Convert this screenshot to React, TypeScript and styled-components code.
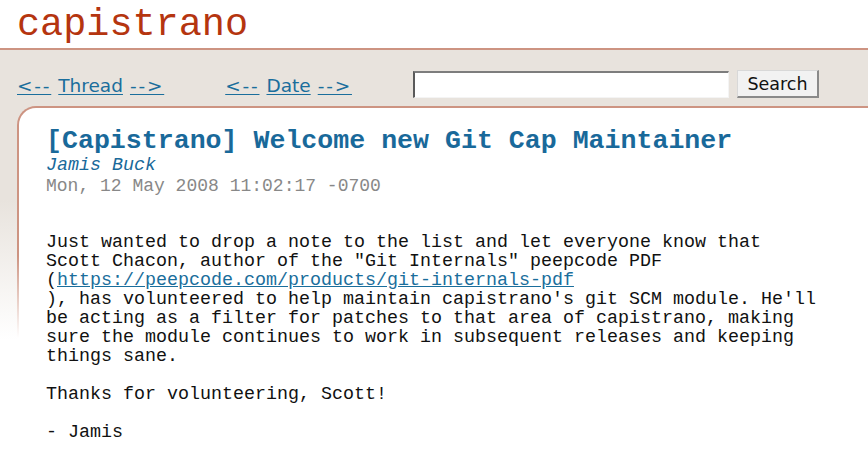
import React from "react";
import styled, { createGlobalStyle } from "styled-components";

const Global = createGlobalStyle`
  html, body { margin: 0; padding: 0; background: #fff; overflow: hidden; }
  #root { min-height: 456px; }
`;

const Page = styled.div`
  display: flex;
  flex-direction: column;
  min-height: 456px;
`;

const Header = styled.header`
  height: 50px;
  box-sizing: border-box;
  padding: 6px 0 0 17px;
  border-bottom: 2px solid #cd9482;
  background: #fff;
`;

const Logo = styled.a`
  font-family: "Liberation Mono", "Courier New", monospace;
  font-size: 38.5px;
  line-height: 1;
  color: #b5350f;
  text-decoration: none;
`;

const Main = styled.main`
  flex: 1;
  display: flex;
  flex-direction: column;
  background: linear-gradient(to bottom, #e8e3dd 0, #e8e3dd 150px, #ffffff 290px);
`;

const Nav = styled.nav`
  display: flex;
  align-items: center;
  height: 28px;
  padding: 20px 0 8px 17px;
  font-family: "DejaVu Sans", Verdana, sans-serif;
  font-size: 18.5px;
`;

const NavGroup = styled.span<{ $gap: number }>`
  display: inline-flex;
  gap: 7px;
  padding-top: 2px;
  margin-right: ${(p) => p.$gap}px;
`;

const NavLink = styled.a<{ $arrow?: boolean }>`
  color: #1a6e9c;
  text-decoration: underline;
  text-underline-offset: 2px;
  letter-spacing: ${(p) => (p.$arrow ? "1.8px" : "0")};
`;

const SearchForm = styled.form`
  display: flex;
  align-items: center;
  gap: 8px;
  margin: 0;
`;

const SearchInput = styled.input`
  box-sizing: border-box;
  width: 316px;
  height: 27px;
  margin: 0;
  padding: 0 4px;
  background: #fff;
  border-top: 2px solid #7d7d7d;
  border-left: 2px solid #5a5a5a;
  border-right: 1px solid #f4f4f4;
  border-bottom: 1px solid #f4f4f4;
  outline: none;
`;

const SearchButton = styled.button`
  box-sizing: border-box;
  width: 82px;
  height: 28px;
  margin: 0;
  padding: 0;
  font-family: "DejaVu Sans", Verdana, sans-serif;
  font-size: 17.5px;
  color: #111;
  background: #f2f2f2;
  border-top: 1px solid #d8d8d8;
  border-left: 1px solid #d8d8d8;
  border-right: 2px solid #8a8a8a;
  border-bottom: 2px solid #8a8a8a;
`;

const CardFrame = styled.div`
  margin-left: 17px;
  flex: 1;
  display: flex;
  padding: 2px 0 0 2px;
  border-top-left-radius: 19px;
  background: linear-gradient(to bottom, #cd9482 0, #cd9482 150px, #ffffff 232px);
`;

const Card = styled.article`
  flex: 1;
  background: #fff;
  border-top-left-radius: 17px;
  padding: 19px 0 0 27px;
  display: flex;
  flex-direction: column;
`;

const Title = styled.h1`
  margin: 0;
  font-family: "Liberation Mono", "Courier New", monospace;
  font-weight: bold;
  font-size: 26.6px;
  line-height: 29px;
  color: #19699a;
`;

const Author = styled.div`
  font-family: "Liberation Mono", "Courier New", monospace;
  font-style: italic;
  font-size: 18.33px;
  line-height: 20px;
  color: #19699a;
`;

const DateLine = styled.div`
  font-family: "Liberation Mono", "Courier New", monospace;
  font-size: 18px;
  line-height: 20px;
  color: #888;
`;

const Body = styled.pre`
  margin: 37px 0 0 0;
  font-family: "Liberation Mono", "Courier New", monospace;
  font-size: 18.33px;
  line-height: 19px;
  color: #111;
  white-space: pre;
`;

const BodyLink = styled.a`
  color: #1a6e9c;
  text-decoration: underline;
`;

export default function App() {
  return (
    <>
      <Global />
      <Page>
        <Header>
          <Logo href="#">capistrano</Logo>
        </Header>
        <Main>
          <Nav>
            <NavGroup $gap={61}>
              <NavLink href="#" $arrow>&lt;--</NavLink>
              <NavLink href="#">Thread</NavLink>
              <NavLink href="#" $arrow>--&gt;</NavLink>
            </NavGroup>
            <NavGroup $gap={61}>
              <NavLink href="#" $arrow>&lt;--</NavLink>
              <NavLink href="#">Date</NavLink>
              <NavLink href="#" $arrow>--&gt;</NavLink>
            </NavGroup>
            <SearchForm onSubmit={(e) => e.preventDefault()}>
              <SearchInput type="text" />
              <SearchButton type="submit">Search</SearchButton>
            </SearchForm>
          </Nav>
          <CardFrame>
            <Card>
              <Title>[Capistrano] Welcome new Git Cap Maintainer</Title>
              <Author>Jamis Buck</Author>
              <DateLine>Mon, 12 May 2008 11:02:17 -0700</DateLine>
              <Body>
                {"Just wanted to drop a note to the list and let everyone know that\n"}
                {"Scott Chacon, author of the \"Git Internals\" peepcode PDF\n("}
                <BodyLink href="#">https://peepcode.com/products/git-internals-pdf</BodyLink>
                {"\n), has volunteered to help maintain capistrano's git SCM module. He'll\n"}
                {"be acting as a filter for patches to that area of capistrano, making\n"}
                {"sure the module continues to work in subsequent releases and keeping\n"}
                {"things sane.\n\nThanks for volunteering, Scott!\n\n- Jamis"}
              </Body>
            </Card>
          </CardFrame>
        </Main>
      </Page>
    </>
  );
}
